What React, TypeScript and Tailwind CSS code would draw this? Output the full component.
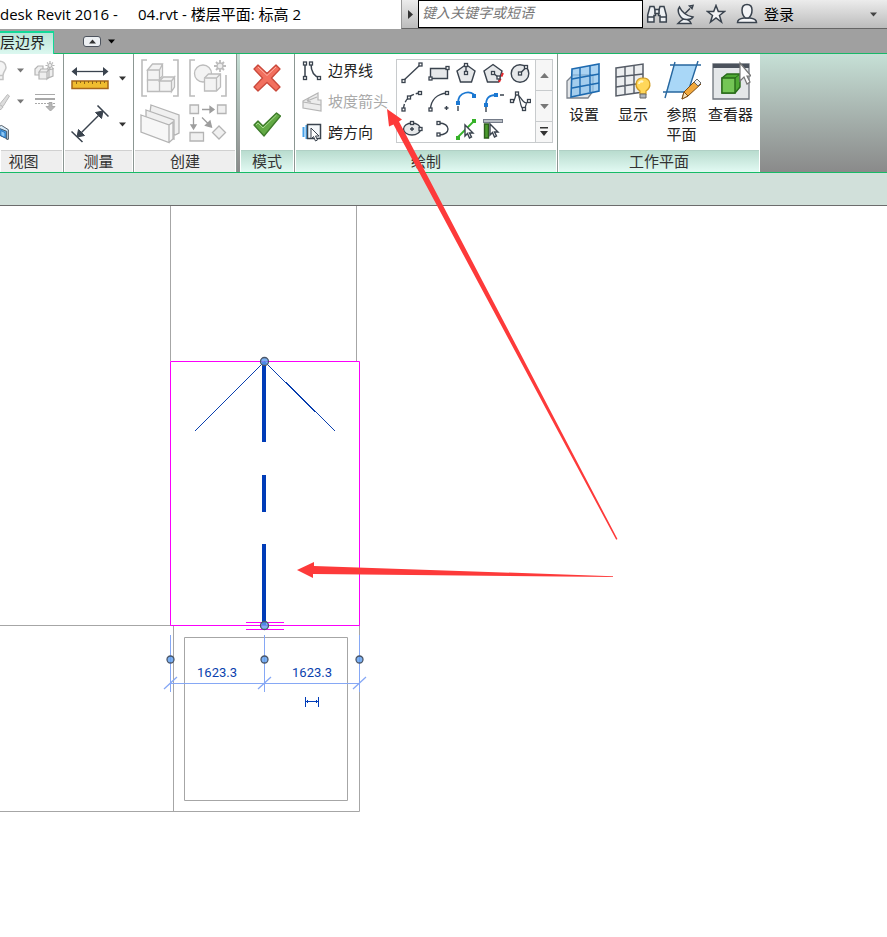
import type { ReactNode } from "react";

const INK = "#3a434e";
const FAINT = "#c4c4c4";

function Caret({ className = "" }: { className?: string }) {
  return (
    <svg className={className} width="7" height="5" viewBox="0 0 7 5" fill="currentColor">
      <path d="M0 0.5h7L3.5 4.5z" />
    </svg>
  );
}

/* ---------- title bar icons ---------- */

function Binoculars() {
  return (
    <svg width="22" height="22" viewBox="0 0 22 22" fill="#eef1f4" stroke={INK} strokeWidth="1.5">
      <path d="M4 3.5h4l1.5 5v4H8v6.500H1.700v-7z" />
      <path d="M18 3.500h-4l-1.500 5v4H14v6.500h6.300v-7z" />
      <path d="M9 6.500h4v4H9zM2 14h6M14 14h6" />
    </svg>
  );
}

function Dish() {
  return (
    <svg width="20" height="22" viewBox="0 0 20 22" fill="#eef1f4" stroke={INK} strokeWidth="1.500">
      <path d="M2 20.500h13l-1-2-5-3.500-5 3.500z" />
      <path d="M3.500 4C0 9 5 17 11 16.500c2.500 0 5-1 6-2.500C11 13 6 9.500 3.500 4z" />
      <path d="M9 10.500l5-5M13.500 3l2.500 2.500 1-3z" />
    </svg>
  );
}

function Star() {
  return (
    <svg width="20" height="20" viewBox="0 0 20 20" fill="#f4f5f7" stroke={INK} strokeWidth="1.500">
      <path d="M10 1.500l2.300 6h6.200l-5 3.900 2 6.600-5.500-4-5.500 4 2-6.600-5-3.900h6.200z" />
    </svg>
  );
}

function Person() {
  return (
    <svg width="22" height="22" viewBox="0 0 22 22" fill="#f4f5f7" stroke={INK} strokeWidth="1.500">
      <path d="M1.500 19.500c0-3 3-4 6.500-4.500h6c3.500.5 6.500 1.500 6.500 4.500z" />
      <path d="M11 1.500c-3.500 0-5 2-5 5.500 0 4 2 7 3.500 8h3c1.500-1 3.500-4 3.500-8 0-3.500-1.500-5.500-5-5.500z" />
    </svg>
  );
}

/* ---------- ribbon icons ---------- */

function Bulb() {
  return (
    <svg width="10" height="22" viewBox="0 0 10 22" fill="#f4f4f4" stroke={FAINT} strokeWidth="1.500">
      <path d="M-2 1.500c5-1 8 2 8 6 0 3-3 4-3 8v4H-2z" />
      <path d="M-2 15.500h5" />
    </svg>
  );
}

function SunCube() {
  return (
    <svg width="22" height="20" viewBox="0 0 22 20" fill="#eee" stroke="#b4b4b4" strokeWidth="1.200">
      <path d="M1 8l3-3h5v9H1zM14 9l5-1v7l-5 2z" />
      <path d="M5 11l2-3h8l-2 3zM5 11h8v7H5zM13 11l2-3v8l-2 2z" />
      <circle cx="16" cy="4.500" r="2" />
      <path d="M16 0v2M16 7v2M11.500 4.500h2M18.500 4.500h2M13 1.500l1 1M18 6.500l1.500 1.500M19 1.500l-1 1M14 6.500L13 8" />
    </svg>
  );
}

function Brush() {
  return (
    <svg width="10" height="18" viewBox="0 0 10 18" fill="#dcdcdc" stroke="#bbb">
      <path d="M-1 12L7.500 1.500 9.500 3 3 13.500z" />
      <path d="M-1 11l4 3c-1 2-3 3-4 3z" />
    </svg>
  );
}

function ThinLines() {
  return (
    <svg width="22" height="20" viewBox="0 0 22 20" stroke="#a9a9a9" fill="#b6b6b6">
      <path d="M1 2.500h20" />
      <path d="M1 7h20" strokeWidth="2" />
      <path d="M1 11.500h20" strokeDasharray="2 1" />
      <path d="M15 10.500h3v4h3l-4.500 4.500-4.500-4.500h3z" />
    </svg>
  );
}

function SectionBox() {
  return (
    <svg width="12" height="20" viewBox="0 0 12 20" stroke={INK}>
      <path d="M-2 2L9.500 6.500v11L-2 12z" fill="#4da3e8" />
      <path d="M-2 2l4-1 8 5v11.500H8V8L-2 4z" fill="#d8ecfb" />
      <path d="M1 7l5 2.500v6L1 13z" fill="#8cc8f6" stroke="#1c68b4" />
    </svg>
  );
}

function RulerIcon() {
  return (
    <svg width="38" height="24" viewBox="0 0 38 24">
      <path d="M5 5.500h28" stroke={INK} strokeWidth="1.300" />
      <path d="M0.500 5.500L6 1v9zM37.500 5.500L32 1v9z" fill={INK} />
      <rect x="1" y="15" width="36" height="7.500" fill="#f0bd2f" stroke="#a8671a" strokeWidth="1.500" />
      <path d="M5.500 15v3M9.500 15v2M13.500 15v3M17.500 15v2M21.500 15v3M25.500 15v2M29.500 15v3M33.500 15v2" stroke="#8d6416" />
    </svg>
  );
}

function AlignedDim() {
  return (
    <svg width="38" height="38" viewBox="0 0 38 38" stroke={INK} fill={INK}>
      <path d="M8 30L30 8" strokeWidth="1.500" />
      <path d="M0.500 26.500l11 10.500M26.500 0.500l11 11" strokeWidth="1.500" />
      <path d="M6 32l1.500-7.500 6 6zM32 6l-7.500 1.500 6 6z" />
    </svg>
  );
}

function GroupCubes() {
  return (
    <svg width="38" height="38" viewBox="0 0 38 38" stroke="#bcbcbc" fill="#f3f3f3" strokeWidth="1.300">
      <path d="M6 1H1v36h5M32 1h5v36h-5" fill="none" strokeWidth="1.600" />
      <path d="M6.500 11l5-6h10l-3 6zM18.500 11l3-6v12l-3 3zM6.500 11h12v11h-12z" />
      <path d="M6.500 21h12v11.500h-12zM18.500 22l4-4h11l-3 4zM30.500 22l3-4v10l-3 4.500zM18.500 22h12v10.500h-12z" />
    </svg>
  );
}

function CreateSimilar() {
  return (
    <svg width="38" height="38" viewBox="0 0 38 38" stroke="#bcbcbc" fill="#f3f3f3" strokeWidth="1.300">
      <path d="M6 1H1v36h5M37 16v21h-5" fill="none" strokeWidth="1.600" />
      <circle cx="14" cy="14.500" r="8.500" />
      <path d="M15.500 19l4-4h12v13l-4 4h-12z" />
      <path d="M15.500 19h12v13M27.500 19l4-4" />
      <path d="M31 1v12M25 7h12M27 3l8 8M35 3l-8 8" strokeWidth="1.800" />
      <circle cx="31" cy="7" r="3" fill="#eee" />
    </svg>
  );
}

function Sheets() {
  return (
    <svg width="40" height="40" viewBox="0 0 40 40" stroke="#b4b4b4" fill="#f0f0f0" strokeWidth="1.300">
      <path d="M11 1l28 10v18l-4 2L9 16z" />
      <path d="M6 6l28 10v19L6 24z" />
      <path d="M1 11l28 10v17.500L1 28zM29 21l4-3v17l-4 3.500" fill="#f7f7f7" />
    </svg>
  );
}

function AssemblyIcon() {
  return (
    <svg width="38" height="40" viewBox="0 0 38 40" stroke="#b4b4b4" fill="#f0f0f0" strokeWidth="1.300">
      <path d="M1 1h8.500v8.500H1zM28.500 1H37v8.500h-8.500zM1 28.500h13.500V37H1zM30 22l6.500 6.500L30 35l-6.500-6.500z" />
      <g stroke="#9e9e9e" fill="#9e9e9e">
        <path d="M13 5.500h9M4.500 13v8M13 13.500l6 6" />
        <path d="M25 5.500L21 2.500v6zM4.500 25L2 21h5zM22.500 23l-6-1.500 4.500-4.500z" />
      </g>
    </svg>
  );
}

function CrossIcon() {
  return (
    <svg width="28" height="28" viewBox="0 0 28 28">
      <path
        d="M5 1l9 8.500L23 1l4 4-8.500 9L27 23l-4 4-9-8.500L5 27l-4-4 8.500-9L1 5z"
        fill="#f2705f"
        stroke="#c9483a"
        strokeWidth="1.300"
        strokeLinejoin="round"
      />
      <path d="M5 3l9 8.500L23 3" fill="none" stroke="#ffb1a4" />
    </svg>
  );
}

function CheckIcon() {
  return (
    <svg width="28" height="25" viewBox="0 0 28 25">
      <path d="M1 13l4-4 5 5L23.500 1l4 3L11 24z" fill="#62a944" stroke="#3d7b2a" strokeWidth="1.300" strokeLinejoin="round" />
      <path d="M3 13l2-2 5 5L23.500 3" fill="none" stroke="#a5d68a" />
    </svg>
  );
}

function Nodes({ at }: { at: number[][] }) {
  return (
    <g fill="#fff" stroke={INK} strokeWidth="1.300">
      {at.map(([x, y]) => (
        <rect key={`${x}-${y}`} x={x - 1.5} y={y - 1.5} width="3" height="3" />
      ))}
    </g>
  );
}

function BoundaryIcon() {
  return (
    <svg width="20" height="20" viewBox="0 0 20 20" fill="none" stroke={INK} strokeWidth="1.500">
      <path d="M3 3v14M9 3c0 7 2 12 9 14" />
      <Nodes at={[[3, 2.5], [3, 17], [9, 2.5], [17, 17]]} />
    </svg>
  );
}

function SlopeIcon() {
  return (
    <svg width="20" height="20" viewBox="0 0 20 20" fill="#ededed" stroke="#b5b5b5" strokeWidth="1.200">
      <path d="M1 9L16 1v7h3v11L1 16z" />
      <path d="M1 10l18 3M5 9l10-4M5 9l2-3M5 9l4 1" />
    </svg>
  );
}

function Pointer({ x, y }: { x: number; y: number }) {
  return (
    <path
      transform={`translate(${x} ${y})`}
      d="M0 0v11l2.500-2.500 2 4.500 2-1-2-4h3.500z"
      fill="#fff"
      stroke={INK}
    />
  );
}

function SpanIcon() {
  return (
    <svg width="20" height="20" viewBox="0 0 20 20">
      <path d="M1.500 4v10M4.500 2v14" stroke="#45a0e8" strokeWidth="2" />
      <path d="M5.500 1.500h13v14h-13z" fill="#f5f8fb" stroke={INK} strokeWidth="1.500" />
      <Pointer x={9} y={5} />
    </svg>
  );
}

function Tool({ children }: { children: ReactNode }) {
  return (
    <svg width="22" height="22" viewBox="0 0 22 22" fill="none" stroke={INK} strokeWidth="1.400">
      {children}
    </svg>
  );
}

const drawTools: { name: string; icon: ReactNode }[] = [
  { name: "直线", icon: <Tool><path d="M2 19L19 3" /><Nodes at={[[2.5, 19], [19.500, 2.500]]} /></Tool> },
  { name: "矩形", icon: <Tool><path d="M2.500 6.500h17v10h-17z" fill="#e6e8ea" /><Nodes at={[[2.500, 16.500], [19.500, 6]]} /></Tool> },
  { name: "内接多边形", icon: <Tool><path d="M11 2.500l9 6.500-3.500 11h-11L2 9z" fill="#e6e8ea" /><path d="M11 3v8" /><Nodes at={[[11, 3], [11, 11]]} /></Tool> },
  { name: "外接多边形", icon: <Tool><path d="M11 2.500l9 6.500-3.500 11h-11L2 9z" fill="#e6e8ea" /><path d="M11 11l5 4" /><path d="M21 11l-4 9" stroke="#e3262b" strokeDasharray="4 2" strokeWidth="2" /><Nodes at={[[11, 11], [16.500, 15.500]]} /></Tool> },
  { name: "圆形", icon: <Tool><circle cx="11" cy="11.500" r="8.800" fill="#e6e8ea" /><path d="M11 11.500l6-6" /><Nodes at={[[11, 11.500], [17, 5]]} /></Tool> },
  { name: "起点终点半径弧", icon: <Tool><path d="M2.500 19C3 10 9 4 19 3" strokeDasharray="5 2" /><Nodes at={[[2.500, 19.500], [8, 7.500], [19, 3]]} /></Tool> },
  { name: "圆心端点弧", icon: <Tool><path d="M2.500 19C3 10 9 4 19 3" /><path d="M16.500 18h4M18.500 16v4" /><Nodes at={[[2.500, 19.500], [19, 3]]} /></Tool> },
  { name: "相切端点弧", icon: <Tool><path d="M3 13C3 1 17 0 20 6" stroke="#1b78d2" strokeWidth="1.800" /><path d="M3 16v5" /><g fill="#1b78d2" stroke="none"><path d="M1 11h4v4H1zM17 4h4v4h-4z" /></g></Tool> },
  { name: "圆角弧", icon: <Tool><path d="M4 15C4 8 7 5 14 5" stroke="#1b78d2" strokeWidth="1.800" /><path d="M4 17v5M18 5h4" /><g fill="#1b78d2" stroke="none"><path d="M2 13h4v4H2zM12 3h4v4h-4z" /></g></Tool> },
  { name: "样条曲线", icon: <Tool><path d="M3 11C6 14 6 3 8 4c2 1 4 5 6 7s4 3 6 0M3 11c4 0 3-7 5-7 3 0 3 16 7 15 2 0 1-7 5-8" strokeWidth="1.200" /><Nodes at={[[3, 11], [8, 3.500], [15, 19], [20, 11]]} /></Tool> },
  { name: "椭圆", icon: <Tool><ellipse cx="11" cy="11" rx="8.500" ry="6" fill="#e6e8ea" /><path d="M9 11h4M11 9v4" /><Nodes at={[[11, 5], [19.500, 11]]} /></Tool> },
  { name: "半椭圆", icon: <Tool><path d="M11 5c12 0 12 12 0 12" /><Nodes at={[[10.500, 5], [10.500, 16.500]]} /></Tool> },
  { name: "拾取线", icon: <Tool><path d="M2 20L20 2" stroke="#35b228" strokeWidth="1.800" /><path d="M1 18h4v4H1zM17 1h4v4h-4z" fill="#35b228" stroke="none" /><Pointer x={10} y={7} /></Tool> },
  { name: "拾取墙", icon: <Tool><path d="M1 3h20" strokeWidth="4" stroke="#747b88" /><path d="M2 3h18" stroke="#d5d8dd" /><path d="M2.500 6h4v14h-4z" fill="#4b9b2d" stroke="#2c5d1b" /><Pointer x={8} y={6} /></Tool> },
];

function SetPlane() {
  return (
    <svg width="38" height="40" viewBox="0 0 38 40">
      <path d="M2 20l6-6h20v16l-5 7H2z" fill="#e3e6e9" stroke="#7c838c" strokeWidth="1.300" />
      <path d="M7 8l27-5v27L6 36z" fill="#8fc4ee" fillOpacity="0.75" stroke="#1d6ab0" strokeWidth="1.600" />
      <path d="M15 7v27M25 5v26M7 18l27-5M7 27l27-5" stroke="#1d6ab0" strokeWidth="1.400" />
    </svg>
  );
}

function ShowPlane() {
  return (
    <svg width="38" height="40" viewBox="0 0 38 40">
      <path d="M2 7l27-4v28L2 35z" fill="#eceef0" stroke="#565c66" strokeWidth="1.500" />
      <path d="M11 6v27M20 5v27M2 16l27-3M2 26l27-4" stroke="#565c66" strokeWidth="1.400" />
      <path d="M29 17c-8 0-9 9-3 13v3h6v-3c6-4 5-13-3-13z" fill="#ffd75a" stroke="#d19a1c" strokeWidth="1.200" />
      <path d="M26 33h6v4h-6z" fill="#aeb4bc" stroke="#666" />
      <path d="M25 23c0-3 3-3 4-2" stroke="#fff6c8" fill="none" strokeWidth="2" />
    </svg>
  );
}

function RefPlane() {
  return (
    <svg width="38" height="40" viewBox="0 0 38 40">
      <path d="M11 4h23L25 31H3z" fill="#a9d7f7" />
      <path d="M7 4h31M-1 31h28M12 1L2 37M35 0L25 31" stroke="#27679f" strokeWidth="1.400" />
      <path d="M19 38l2-7L33 19l5 4-13 12z" fill="#f1a83c" stroke="#7b4b13" />
      <path d="M19 38l2-7 4 4z" fill="#f8e3b9" stroke="#7b4b13" />
      <path d="M31 21l3-3 4 4-3 3z" fill="#eee" stroke="#666" />
    </svg>
  );
}

function Viewer() {
  return (
    <svg width="40" height="40" viewBox="0 0 40 40">
      <path d="M2 3h36v35H2z" fill="#e4e7e9" stroke="#6d747c" strokeWidth="1.300" />
      <path d="M2 3h36v4H2z" fill="#4b525c" />
      <path d="M11 17l5-4h13v13l-5 6H11z" fill="#4fa934" stroke="#286b19" strokeWidth="1.400" />
      <path d="M11 17h13v15H11z" fill="#74c655" stroke="#286b19" strokeWidth="1.400" />
      <path d="M24 17l5-4" stroke="#286b19" />
      <path d="M29 2v18l4-4 3 7 3-2-3-6h4z" fill="#fff" stroke="#777" strokeWidth="1.200" />
    </svg>
  );
}

/* ---------- ribbon layout ---------- */

function Panel({
  title,
  green = false,
  className = "",
  children,
}: {
  title: string;
  green?: boolean;
  className?: string;
  children: ReactNode;
}) {
  return (
    <section className={`flex shrink-0 flex-col border-r border-[#8c9793] bg-white ${className}`}>
      <div className="h-24">{children}</div>
      <h2
        className={`mx-px h-[22px] border-t text-center text-[15px] leading-5 text-[#333] ${
          green ? "border-[#b0d0c5] bg-linear-to-b from-[#b9dccf] to-[#e2faf3]" : "border-[#d0d0d0] bg-[#eee]"
        }`}
      >
        {title}
      </h2>
    </section>
  );
}

function IconButton({ label, className = "", children }: { label: string; className?: string; children: ReactNode }) {
  return (
    <button type="button" aria-label={label} className={`flex items-center justify-center ${className}`}>
      {children}
    </button>
  );
}

function DrawRow({ label, icon, disabled = false }: { label: string; icon: ReactNode; disabled?: boolean }) {
  return (
    <button type="button" disabled={disabled} className="flex h-[31px] items-center gap-1.5 whitespace-nowrap text-[15px] text-[#222] disabled:text-[#aaa]">
      {icon}
      {label}
    </button>
  );
}

function BigButton({ label, icon, className }: { label: ReactNode; icon: ReactNode; className: string }) {
  return (
    <button type="button" className={`flex flex-col items-center text-[15px] leading-5 text-[#222] ${className}`}>
      <span className="mb-[3px] flex h-10 items-center">{icon}</span>
      {label}
    </button>
  );
}

function Ribbon() {
  return (
    <div className="flex h-[118px] bg-linear-to-b from-[#c6e0d6] to-[#8a8a8a]">
      <Panel title="视图" className="w-16 [&>h2]:pr-4">
        <div className="grid grid-cols-[10px_20px_1fr] grid-rows-[31px_31px_31px] pt-px">
          <IconButton label="灯光"><Bulb /></IconButton>
          <IconButton label="灯光选项" className="text-[#777]"><Caret /></IconButton>
          <IconButton label="渲染" className="pr-1"><SunCube /></IconButton>
          <IconButton label="画笔"><Brush /></IconButton>
          <IconButton label="画笔选项" className="text-[#777]"><Caret /></IconButton>
          <IconButton label="细线" className="pr-1"><ThinLines /></IconButton>
          <IconButton label="剖面框"><SectionBox /></IconButton>
        </div>
      </Panel>
      <Panel title="测量" className="w-[70px]">
        <div className="grid grid-cols-[51px_14px] grid-rows-[46px_46px] pt-px text-[#333]">
          <IconButton label="测量"><RulerIcon /></IconButton>
          <IconButton label="测量选项"><Caret /></IconButton>
          <IconButton label="对齐尺寸标注"><AlignedDim /></IconButton>
          <IconButton label="标注选项"><Caret /></IconButton>
        </div>
      </Panel>
      <Panel title="创建" className="w-[103px]">
        <div className="grid grid-cols-[48px_48px] grid-rows-[46px_46px] pt-px pl-0.5">
          <IconButton label="创建组"><GroupCubes /></IconButton>
          <IconButton label="创建类似"><CreateSimilar /></IconButton>
          <IconButton label="创建部件"><Sheets /></IconButton>
          <IconButton label="创建部件集"><AssemblyIcon /></IconButton>
        </div>
      </Panel>
      <Panel title="模式" green className="ml-[3px] w-[55px]">
        <div className="grid grid-rows-[46px_46px] pt-px">
          <IconButton label="取消编辑模式"><CrossIcon /></IconButton>
          <IconButton label="完成编辑模式"><CheckIcon /></IconButton>
        </div>
      </Panel>
      <Panel title="绘制" green className="w-[263px]">
        <div className="flex items-start">
          <div className="flex w-[101px] flex-col pt-px pl-[7px]">
            <DrawRow label="边界线" icon={<BoundaryIcon />} />
            <DrawRow label="坡度箭头" icon={<SlopeIcon />} disabled />
            <DrawRow label="跨方向" icon={<SpanIcon />} />
          </div>
          <div className="mt-[5px] flex h-21 w-[157px] bg-white inset-ring inset-ring-[#c8cbcd]">
            <div className="grid flex-1 grid-cols-[27px_27px_27px_27px_27px] grid-rows-[28px_28px_28px] pl-0.5">
              {drawTools.map((tool) => (
                <IconButton key={tool.name} label={tool.name}>{tool.icon}</IconButton>
              ))}
            </div>
            <div className="flex w-[18px] flex-col border border-[#c8cbcd] bg-[#f6f6f6] text-[#777]">
              <IconButton label="向上滚动" className="flex-1"><Caret className="rotate-180 scale-125" /></IconButton>
              <IconButton label="向下滚动" className="flex-1 border-y border-[#c8cbcd]"><Caret className="scale-125" /></IconButton>
              <IconButton label="展开" className="h-5 text-[#333]">
                <svg width="10" height="10" viewBox="0 0 10 10" fill="currentColor"><path d="M1 0h8v1.500H1zM1 4h8L5 9z" /></svg>
              </IconButton>
            </div>
          </div>
        </div>
      </Panel>
      <Panel title="工作平面" green className="w-[202px] border-r-0">
        <div className="flex pt-[7px] pl-0.5">
          <BigButton label="设置" icon={<SetPlane />} className="w-12" />
          <BigButton label="显示" icon={<ShowPlane />} className="w-[50px]" />
          <BigButton label={<>参照<br />平面</>} icon={<RefPlane />} className="w-[47px]" />
          <BigButton label="查看器" icon={<Viewer />} className="w-[51px] whitespace-nowrap" />
        </div>
      </Panel>
    </div>
  );
}

/* ---------- drawing area ---------- */

function Grip({ x, y, r = 3.5 }: { x: number; y: number; r?: number }) {
  return <circle cx={x} cy={y} r={r} fill="#5c9df0" fillOpacity="0.8" stroke="#4a5668" strokeWidth="1.300" />;
}

function FloorPlan() {
  return (
    <svg className="block" width="887" height="731" viewBox="0 206 887 731" fill="none" role="img" aria-label="楼层平面: 标高 2">
      <path
        d="M170.500 206v155M356.500 206v155M0 625.500h173M173.500 625v186M0 811.500h359.500V625M184.500 637.500h163v163h-163z"
        stroke="#a6a6a6"
      />
      <path d="M170.500 361.500h189v264h-189z" stroke="#fa00fa" />
      <path d="M246 622.500h38M246 629.500h38" stroke="#fa00fa" />
      <path d="M264.500 361.500L194.500 431.500M264.500 361.500l71 70" stroke="#0a3fae" shapeRendering="crispEdges" />
      <path d="M264 362v80M264 475v37M264 544v81" stroke="#003cb8" strokeWidth="4" />
      <g stroke="#86a8f5">
        <path d="M170.500 635v57M264.500 635v57M359.500 635v57M170 683.500h190" />
        <path d="M164 689l13-12M258 689l13-12M353 689l13-12" strokeWidth="1.300" />
      </g>
      <Grip x={264.5} y={361.5} r={4} />
      <Grip x={264.5} y={625.5} r={4} />
      <Grip x={170.5} y={659.5} />
      <Grip x={264.5} y={659.5} />
      <Grip x={359.5} y={659.5} />
      <g fill="#0a3fae" fontFamily="Roboto, 'Liberation Sans', sans-serif" fontSize="13" textAnchor="middle">
        <text x="217" y="677">1623.3</text>
        <text x="312" y="677">1623.3</text>
      </g>
      <path d="M305.500 697v10M318.500 697v10M306 701.500h12M307.500 700v3M316.500 700v3" stroke="#003cb8" />
    </svg>
  );
}

function RedArrows() {
  return (
    <svg className="pointer-events-none absolute top-0 left-0" width="887" height="937" viewBox="0 0 887 937" fill="#fd3a3a">
      <path d="M387 109l15 10.500-3 2L617.500 539l-1.300.8L393.500 124.500l-4.500 2z" />
      <path d="M297 570l17-8v4l299 10.200v.8L313 574v4z" />
    </svg>
  );
}

export default function App() {
  return (
    <main className="relative min-h-screen overflow-hidden bg-white font-['Open_Sans','Noto_Sans_CJK_SC',sans-serif]">
      <header className="flex h-[29px] text-[15px] text-black">
        <h1 className="flex w-[401px] shrink-0 items-center whitespace-nowrap">
          <span className="w-[138px]">desk Revit 2016 -</span>
          <span>04.rvt - 楼层平面: 标高 2</span>
        </h1>
        <div className="flex flex-1 items-center border-b border-l border-b-[#666] border-l-[#999] bg-linear-to-b from-[#ececec] to-[#bcbcbc]">
          <IconButton label="展开搜索" className="h-full w-4">
            <svg width="5" height="9" viewBox="0 0 5 9" fill="#333"><path d="M0 0l5 4.500L0 9z" /></svg>
          </IconButton>
          <input
            type="text"
            aria-label="搜索"
            placeholder="键入关键字或短语"
            className="h-7 w-[225px] self-start border border-black bg-white px-[3px] pb-1 text-[14px] italic outline-none placeholder:text-[#777]"
          />
          <IconButton label="搜索" className="ml-[3px]"><Binoculars /></IconButton>
          <IconButton label="通讯中心" className="ml-2"><Dish /></IconButton>
          <IconButton label="收藏夹" className="ml-2.5"><Star /></IconButton>
          <button type="button" className="ml-2.5 flex items-center gap-1.5 whitespace-nowrap"><Person />登录</button>
          <IconButton label="登录选项" className="mr-2.5 ml-auto text-[#444]"><Caret /></IconButton>
        </div>
      </header>
      <nav className="flex h-[25px] items-end border-b border-[#18b868] bg-[#a0a0a0]">
        <button type="button" className="-mb-px h-[23px] w-[54px] border-t-2 border-r border-[#12d998] bg-linear-to-b from-[#b9e4d7] to-[#dcf8f0] pb-1 text-left text-[15px] leading-4 whitespace-nowrap text-[#222]">
          层边界
        </button>
        <button type="button" aria-label="最小化功能区" className="mb-1.5 ml-[29px] flex items-center gap-[7px] text-black">
          <span className="flex h-[11px] w-[18px] items-center justify-center rounded-[3px] border border-[#4d535d] bg-[#edf0f3] text-[#333]">
            <Caret className="rotate-180" />
          </span>
          <Caret />
        </button>
      </nav>
      <Ribbon />
      <div className="h-[34px] border-t border-b border-t-[#16bb66] border-b-[#6c6c6c] bg-[#d1e0da]" />
      <FloorPlan />
      <RedArrows />
    </main>
  );
}
